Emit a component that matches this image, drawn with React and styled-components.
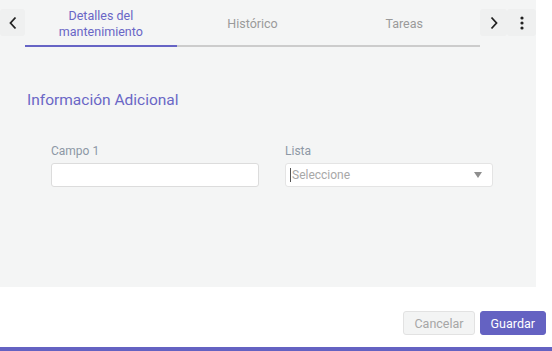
import React from "react";
import styled, { createGlobalStyle } from "styled-components";

const Global = createGlobalStyle`
  body {
    margin: 0;
    background: #ffffff;
    font-family: Roboto, "Liberation Sans", sans-serif;
  }
`;

const Page = styled.div`
  width: 552px;
  height: 351px;
  display: flex;
  flex-direction: column;
  position: relative;
`;

const Panel = styled.div`
  width: 536px;
  height: 287px;
  background: #f4f5f5;
  display: flex;
  flex-direction: column;
`;

const TabBar = styled.div`
  display: flex;
  align-items: flex-start;
  padding-top: 9px;
  height: 38px;
`;

const NavButton = styled.button`
  width: ${(p) => p.w || 25}px;
  height: 27px;
  border: none;
  border-radius: 3px;
  background: #eff0f0;
  padding: 0;
  display: flex;
  align-items: center;
  justify-content: center;
  cursor: pointer;
`;

const Tabs = styled.div`
  width: 455px;
  display: flex;
`;

const Tab = styled.div`
  flex: 1;
  height: 43px;
  margin-top: -9px;
  padding-top: 2px;
  box-sizing: content-box;
  display: flex;
  align-items: center;
  justify-content: center;
  text-align: center;
  font-size: 12.5px;
  line-height: 16px;
  color: ${(p) => (p.active ? "#6966c6" : "#9a9a9a")};
  border-bottom: 2px solid ${(p) => (p.active ? "#6664c5" : "#cccccc")};
`;

const Content = styled.div`
  padding: 44px 0 0 27px;
`;

const Heading = styled.h2`
  margin: 0;
  font-size: 15.5px;
  font-weight: 400;
  color: #6a67c6;
`;

const Fields = styled.div`
  display: flex;
  gap: 26px;
  padding: 35px 0 0 51px;
`;

const Field = styled.div`
  display: flex;
  flex-direction: column;
  gap: 5px;
  width: 208px;
`;

const Label = styled.label`
  font-size: 12px;
  color: #8d98a5;
  line-height: 14px;
`;

const Input = styled.input`
  box-sizing: border-box;
  width: 208px;
  height: 24px;
  border: 1px solid #dcdcdc;
  border-radius: 3px;
  background: #fff;
  outline: none;
`;

const Select = styled.div`
  box-sizing: border-box;
  width: 208px;
  height: 24px;
  border: 1px solid #e4e4e4;
  border-radius: 3px;
  background: #fff;
  display: flex;
  align-items: center;
  justify-content: space-between;
  padding: 0 10px 0 4px;
  font-size: 12px;
  color: #a8a8a8;
`;

const Placeholder = styled.span`
  border-left: 1px solid #555;
  padding-left: 1px;
  line-height: 14px;
`;

const Caret = styled.span`
  width: 0;
  height: 0;
  border-left: 4px solid transparent;
  border-right: 4px solid transparent;
  border-top: 6px solid #8e8e8e;
`;

const Footer = styled.div`
  display: flex;
  justify-content: flex-end;
  gap: 5px;
  padding: 24px 6px 0 0;
`;

const Button = styled.button`
  box-sizing: border-box;
  height: 24px;
  padding: 0 10px;
  border-radius: 3px;
  font-family: inherit;
  font-size: 12.5px;
  border: 1px solid ${(p) => (p.primary ? "#6462c2" : "#e2e2e2")};
  background: ${(p) => (p.primary ? "#6462c2" : "#f3f4f4")};
  color: ${(p) => (p.primary ? "#ffffff" : "#a6a6a6")};
  cursor: pointer;
`;

const BottomBar = styled.div`
  position: absolute;
  left: 0;
  right: 0;
  bottom: 0;
  height: 4px;
  background: #6462c2;
`;

const Chevron = ({ dir }) => (
  <svg width="10" height="14" viewBox="0 0 10 14">
    <path
      d={dir === "left" ? "M7.5 1.5 L2.5 7 L7.5 12.5" : "M2.5 1.5 L7.5 7 L2.5 12.5"}
      fill="none"
      stroke="#222"
      strokeWidth="1.8"
    />
  </svg>
);

const Dots = () => (
  <svg width="4" height="14" viewBox="0 0 4 14">
    <circle cx="2" cy="2" r="1.6" fill="#222" />
    <circle cx="2" cy="7" r="1.6" fill="#222" />
    <circle cx="2" cy="12" r="1.6" fill="#222" />
  </svg>
);

export default function App() {
  return (
    <Page>
      <Global />
      <Panel>
        <TabBar>
          <NavButton>
            <Chevron dir="left" />
          </NavButton>
          <Tabs>
            <Tab active>
              Detalles del
              <br />
              mantenimiento
            </Tab>
            <Tab>Histórico</Tab>
            <Tab>Tareas</Tab>
          </Tabs>
          <NavButton w={27}>
            <Chevron dir="right" />
          </NavButton>
          <NavButton w={29}>
            <Dots />
          </NavButton>
        </TabBar>
        <Content>
          <Heading>Información Adicional</Heading>
        </Content>
        <Fields>
          <Field>
            <Label>Campo 1</Label>
            <Input />
          </Field>
          <Field>
            <Label>Lista</Label>
            <Select>
              <Placeholder>Seleccione</Placeholder>
              <Caret />
            </Select>
          </Field>
        </Fields>
      </Panel>
      <Footer>
        <Button>Cancelar</Button>
        <Button primary>Guardar</Button>
      </Footer>
      <BottomBar />
    </Page>
  );
}
